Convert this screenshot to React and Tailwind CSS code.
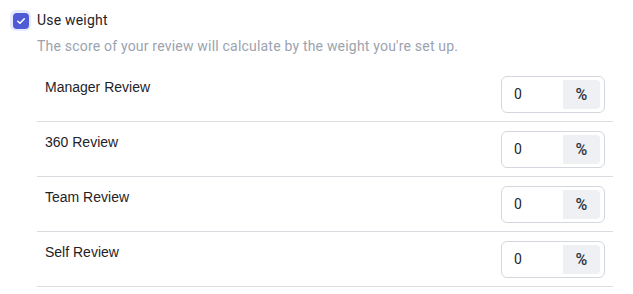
import React from "react";

const rows = ["Manager Review", "360 Review", "Team Review", "Self Review"];

export default function App() {
  return (
    <div className="w-[633px] h-[294px] bg-white pt-[10px] pl-[10px]" style={{ fontFamily: '"Liberation Sans", Arial, sans-serif' }}>
      <div className="flex items-start gap-[6px]">
        <div className="w-[21px] h-[21px] rounded-[6px] bg-[#e6eafe] flex items-center justify-center shrink-0">
          <div className="w-[16px] h-[16px] rounded-[4px] bg-[#4f5bd5] flex items-center justify-center">
            <svg width="10" height="10" viewBox="0 0 10 10" fill="none">
              <path d="M1.8 5.2 L4 7.3 L8.3 2.7" stroke="white" strokeWidth="1.5" strokeLinecap="round" strokeLinejoin="round" />
            </svg>
          </div>
        </div>
        <div className="pt-[1px] font-['Roboto',sans-serif] tracking-[0.2px]">
          <div className="text-[14px] leading-[18px] text-[#1f2328]">Use weight</div>
          <div className="text-[14px] leading-[18px] mt-[8px] text-[#9ca3af]">
            The score of your review will calculate by the weight you're set up.
          </div>
        </div>
      </div>
      <div className="ml-[27px] w-[576px] mt-[12px]">
        {rows.map((r) => (
          <div key={r} className="flex items-start justify-between h-[55px] border-b border-[#d9dce1] pl-[8px] pr-[8px]">
            <div className="pt-[12px] text-[14px] leading-[16px] text-[#1f2328]">{r}</div>
            <div className="mt-[9px] w-[104px] h-[37px] border border-[#d4d8de] rounded-[6px] flex items-center pl-[12px] pr-[4px] font-['Roboto',sans-serif]">
              <span className="flex-1 text-[14px] text-[#1f2328]">0</span>
              <div className="w-[37px] h-[29px] bg-[#eef0f3] rounded-r-[4px] flex items-center justify-center text-[16px] font-medium text-[#2d3440]">%</div>
            </div>
          </div>
        ))}
      </div>
    </div>
  );
}
